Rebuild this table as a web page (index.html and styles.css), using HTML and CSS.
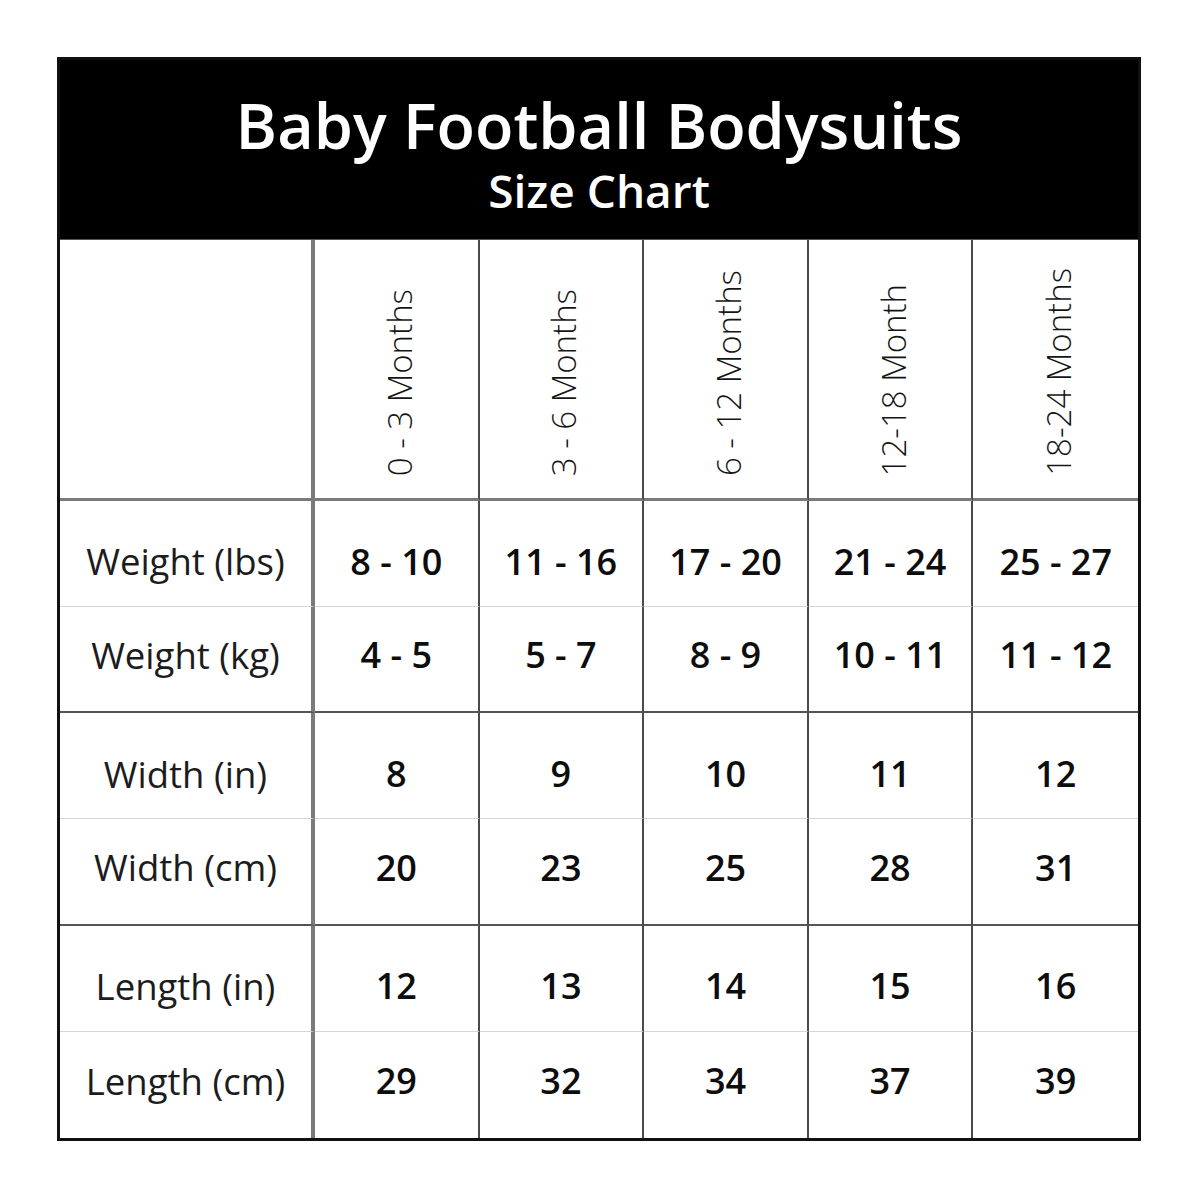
FILE: index.html
```html
<!DOCTYPE html>
<html lang="en">
<head>
<meta charset="utf-8">
<title>Baby Football Bodysuits Size Chart</title>
<link rel="stylesheet" href="styles.css">
</head>
<body>
<div class="chart">
  <header class="chart-head">
    <h1 class="title">Baby Football Bodysuits</h1>
    <h2 class="subtitle">Size Chart</h2>
  </header>
  <div class="grid">
    <div class="cell label head-row"></div>
    <div class="cell head-row"><span class="vert">0 - 3 Months</span></div>
    <div class="cell head-row"><span class="vert">3 - 6 Months</span></div>
    <div class="cell head-row"><span class="vert">6 - 12 Months</span></div>
    <div class="cell head-row"><span class="vert">12-18 Month</span></div>
    <div class="cell head-row last"><span class="vert">18-24 Months</span></div>

    <div class="cell label odd">Weight (lbs)</div>
    <div class="cell val odd">8 - 10</div>
    <div class="cell val odd">11 - 16</div>
    <div class="cell val odd">17 - 20</div>
    <div class="cell val odd">21 - 24</div>
    <div class="cell val odd last">25 - 27</div>

    <div class="cell label even">Weight (kg)</div>
    <div class="cell val even">4 - 5</div>
    <div class="cell val even">5 - 7</div>
    <div class="cell val even">8 - 9</div>
    <div class="cell val even">10 - 11</div>
    <div class="cell val even last">11 - 12</div>

    <div class="cell label odd">Width (in)</div>
    <div class="cell val odd">8</div>
    <div class="cell val odd">9</div>
    <div class="cell val odd">10</div>
    <div class="cell val odd">11</div>
    <div class="cell val odd last">12</div>

    <div class="cell label even">Width (cm)</div>
    <div class="cell val even">20</div>
    <div class="cell val even">23</div>
    <div class="cell val even">25</div>
    <div class="cell val even">28</div>
    <div class="cell val even last">31</div>

    <div class="cell label odd">Length (in)</div>
    <div class="cell val odd">12</div>
    <div class="cell val odd">13</div>
    <div class="cell val odd">14</div>
    <div class="cell val odd">15</div>
    <div class="cell val odd last">16</div>

    <div class="cell label even final">Length (cm)</div>
    <div class="cell val even final">29</div>
    <div class="cell val even final">32</div>
    <div class="cell val even final">34</div>
    <div class="cell val even final">37</div>
    <div class="cell val even final last">39</div>
  </div>
</div>
</body>
</html>
```

FILE: styles.css
```css
html, body {
  margin: 0;
  padding: 0;
  background: #ffffff;
}

body {
  font-family: "Open Sans", "Liberation Sans", sans-serif;
  color: #151515;
  width: 1200px;
  height: 1200px;
}

.chart {
  box-sizing: border-box;
  margin: 57px 0 0 57px;
  width: 1084px;
  height: 1084px;
  border: 3px solid #111111;
  display: flex;
  flex-direction: column;
}

.chart-head {
  background: #000000;
  color: #ffffff;
  height: 179px;
  box-sizing: border-box;
  padding-top: 33px;
  display: flex;
  flex-direction: column;
  align-items: center;
}

.title {
  margin: 0;
  font-size: 63px;
  line-height: 63px;
  font-weight: 600;
  letter-spacing: 0;
}

.subtitle {
  margin: 12px 0 0 0;
  font-size: 46px;
  line-height: 44px;
  font-weight: 600;
}

.grid {
  flex: 1;
  display: grid;
  grid-template-columns: 255px repeat(5, 1fr);
  grid-template-rows: 261px repeat(6, 1fr);
  border-top: 1px solid #555555;
}

.cell {
  box-sizing: border-box;
  display: flex;
  align-items: center;
  justify-content: center;
  border-right: 2px solid #4a4a4a;
  font-size: 36px;
  line-height: 1;
  white-space: nowrap;
}

.cell.last {
  border-right: none;
}

.cell.label {
  border-right: 4px solid #7a7a7a;
  font-size: 36.5px;
  font-weight: 370;
  color: #1c1c1c;
}

.cell.val {
  font-size: 36px;
  font-weight: 540;
  color: #0d0d0d;
}

.head-row {
  border-bottom: 3px solid #7a7a7a;
  align-items: flex-end;
  padding-bottom: 22px;
}

.vert {
  writing-mode: vertical-rl;
  transform: rotate(180deg);
  font-size: 33px;
  font-weight: 350;
  line-height: 1;
  color: #151515;
  margin-left: 6px;
}

.odd {
  border-bottom: 1px solid #d6d6d6;
  padding-top: 16px;
}

.even {
  border-bottom: 2px solid #555555;
  padding-bottom: 8px;
}

.even.final {
  border-bottom: none;
}
```
